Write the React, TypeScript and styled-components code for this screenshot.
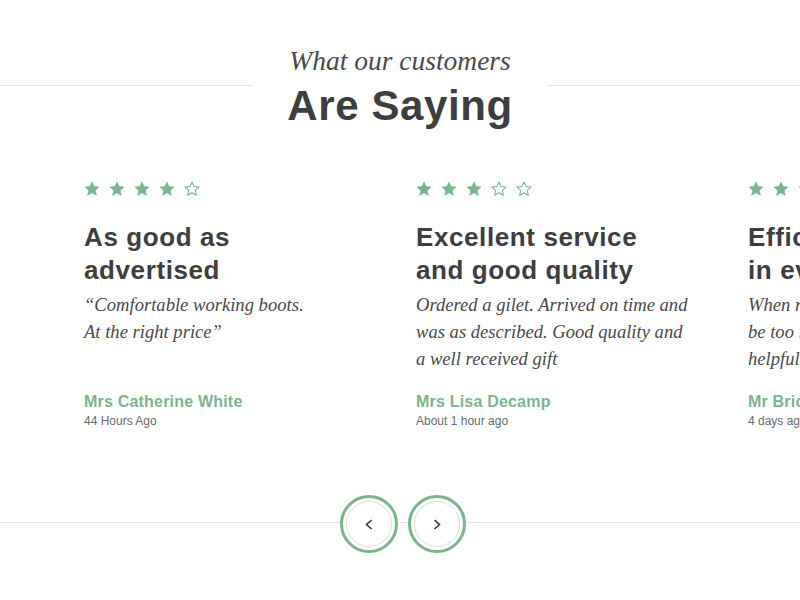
import React from "react";
import styled, { createGlobalStyle } from "styled-components";

type Review = {
  rating: number;
  title: string;
  body: string;
  author: string;
  posted: string;
};

const reviews: Review[] = [
  {
    rating: 4,
    title: "As good as\nadvertised",
    body: "“Comfortable working boots.\nAt the right price”",
    author: "Mrs Catherine White",
    posted: "44 Hours Ago"
  },
  {
    rating: 3,
    title: "Excellent service\nand good quality",
    body: "Ordered a gilet. Arrived on time and\nwas as described. Good quality and\na well received gift",
    author: "Mrs Lisa Decamp",
    posted: "About 1 hour ago"
  },
  {
    rating: 5,
    title: "Efficient service\nin every way",
    body: "When ringing up, nothing seemed to\nbe too inconvenient. Staff were\nhelpful and friendly",
    author: "Mr Brice Clarke",
    posted: "4 days ago"
  }
];

const GREEN = "#78b68e";
const INK = "#3e3e3e";
const RULE = "#e6e6e6";

const GlobalStyle = createGlobalStyle`
  html, body {
    margin: 0;
    padding: 0;
    background: #fff;
  }
  body {
    font-family: "Liberation Sans", Arial, sans-serif;
    color: ${INK};
    overflow: hidden;
  }
`;

const StyledPage = styled.div({
  width: 800,
  paddingTop: 46,
  overflow: "hidden"
});

const StyledHeader = styled.header({
  display: "flex",
  justifyContent: "center",
  background: `linear-gradient(${RULE}, ${RULE}) 0 39px / 100% 1px no-repeat`
});

const StyledHeading = styled.div({
  background: "#fff",
  padding: "0 34px",
  textAlign: "center"
});

const StyledKicker = styled.div({
  fontFamily: '"Liberation Serif", "Times New Roman", serif',
  fontStyle: "italic",
  fontSize: 27.5,
  lineHeight: "30px",
  color: "#4a4a4a"
});

const StyledTitle = styled.h2({
  margin: "7px 0 0",
  fontSize: 42,
  lineHeight: "46px",
  fontWeight: 700,
  letterSpacing: 0.6,
  color: INK
});

const StyledTrack = styled.div({
  display: "flex",
  marginTop: 52,
  paddingLeft: 84
});

const StyledCard = styled.article({
  flex: "0 0 332px",
  boxSizing: "border-box",
  paddingRight: 20,
  whiteSpace: "pre"
});

const StyledStars = styled.div({
  display: "flex",
  gap: 9,
  height: 16
});

const StyledCardTitle = styled.h3({
  margin: "24px 0 0",
  fontSize: 26,
  lineHeight: "33px",
  fontWeight: 700,
  letterSpacing: 0.6,
  color: INK
});

const StyledQuote = styled.p({
  margin: "4px 0 0",
  minHeight: 81,
  fontFamily: '"Liberation Serif", "Times New Roman", serif',
  fontStyle: "italic",
  fontSize: 18.6,
  lineHeight: "27px",
  color: "#4a4a4a"
});

const StyledAuthor = styled.div({
  marginTop: 20,
  fontSize: 16,
  lineHeight: "20px",
  fontWeight: 700,
  letterSpacing: 0.2,
  color: GREEN
});

const StyledPosted = styled.div({
  marginTop: 1,
  fontSize: 12,
  lineHeight: "16px",
  color: "#6a6a6a"
});

const StyledNav = styled.nav({
  display: "flex",
  justifyContent: "center",
  gap: 10,
  marginTop: 66,
  paddingLeft: 6,
  background: `linear-gradient(${RULE}, ${RULE}) 0 27px / 100% 1px no-repeat`
});

const StyledArrow = styled.button({
  width: 58,
  height: 58,
  boxSizing: "border-box",
  padding: 3,
  border: `3px solid ${GREEN}`,
  borderRadius: "50%",
  background: "#fff",
  cursor: "pointer",
  display: "flex"
});

const StyledArrowFace = styled.span({
  flex: 1,
  border: "1px solid #dcdcdc",
  borderRadius: "50%",
  display: "flex",
  alignItems: "center",
  justifyContent: "center"
});

const Star = ({ filled }: { filled: boolean }) => (
  <svg width="16" height="16" viewBox="0 0 24 24">
    <polygon
      points="12,1.5 15.1,8.4 22.5,9.1 16.9,14.1 18.5,21.5 12,17.7 5.5,21.5 7.1,14.1 1.5,9.1 8.9,8.4"
      fill={filled ? GREEN : "none"}
      stroke={GREEN}
      strokeWidth={filled ? 1 : 1.6}
      strokeLinejoin="round"
    />
  </svg>
);

const Chevron = ({ dir }: { dir: "left" | "right" }) => (
  <svg width="8" height="11" viewBox="0 0 8 11">
    <polyline
      points={dir === "left" ? "6.5,1 1.5,5.5 6.5,10" : "1.5,1 6.5,5.5 1.5,10"}
      fill="none"
      stroke="#333"
      strokeWidth="1.6"
    />
  </svg>
);

const ReviewCard = ({ review }: { review: Review }) => (
  <StyledCard>
    <StyledStars>
      {[1, 2, 3, 4, 5].map((n) => (
        <Star key={n} filled={n <= review.rating} />
      ))}
    </StyledStars>
    <StyledCardTitle>{review.title}</StyledCardTitle>
    <StyledQuote>{review.body}</StyledQuote>
    <StyledAuthor>{review.author}</StyledAuthor>
    <StyledPosted>{review.posted}</StyledPosted>
  </StyledCard>
);

const App = () => (
  <StyledPage>
    <GlobalStyle />
    <StyledHeader>
      <StyledHeading>
        <StyledKicker>What our customers</StyledKicker>
        <StyledTitle>Are Saying</StyledTitle>
      </StyledHeading>
    </StyledHeader>

    <StyledTrack>
      {reviews.map((review) => (
        <ReviewCard key={review.author} review={review} />
      ))}
    </StyledTrack>

    <StyledNav>
      <StyledArrow aria-label="Previous">
        <StyledArrowFace>
          <Chevron dir="left" />
        </StyledArrowFace>
      </StyledArrow>
      <StyledArrow aria-label="Next">
        <StyledArrowFace>
          <Chevron dir="right" />
        </StyledArrowFace>
      </StyledArrow>
    </StyledNav>
  </StyledPage>
);

export default App;
